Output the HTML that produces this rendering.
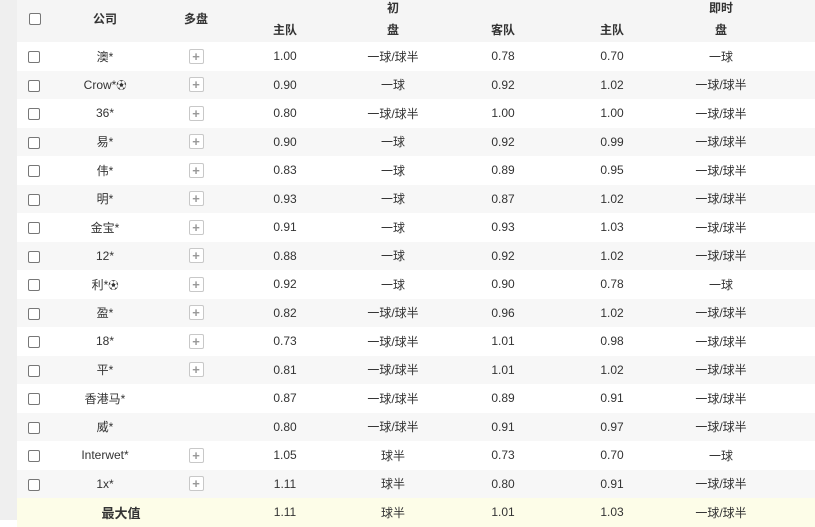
<!DOCTYPE html>
<html><head><meta charset="utf-8"><style>
*{margin:0;padding:0;box-sizing:border-box}
body{width:815px;height:520px;overflow:hidden;background:#fff;font-family:"Liberation Sans","Noto Sans CJK SC",sans-serif;font-size:12px;color:#333;position:relative}
.strip{position:absolute;left:0;top:0;width:17px;height:520px;background:#efefef}
.hd{position:absolute;left:17px;top:0;width:798px;height:42px;background:#f5f5f5}
.t{position:absolute;transform:translateX(-50%);white-space:nowrap;line-height:14px}
.b{font-weight:bold}
.cb{position:absolute;left:29px;width:12px;height:12px;border:1px solid #777;border-radius:2px;background:#fff}
table{position:absolute;left:17px;top:42px;border-collapse:collapse;width:798px;table-layout:fixed}
td{height:28.5px;text-align:center;padding:0;white-space:nowrap}
td.co{padding-left:10px}
tr:nth-child(even){background:#f7f7f7}
tr.mx{background:#fdfde8;font-weight:bold}
.p{display:inline-block;width:15px;height:15px;border:1px solid #c8c8c8;border-radius:2px;color:#999;font-size:13px;line-height:13px;font-weight:bold;vertical-align:middle;background:#fff}
.c{display:inline-block;width:12px;height:12px;border:1px solid #777;border-radius:2px;vertical-align:middle;background:#fff}
.s{font-size:10px}
</style></head><body>
<div class="strip"></div>
<div class="hd"></div>
<div class="cb" style="top:13px"></div>
<div class="t b" style="left:105px;top:12px">公司</div>
<div class="t b" style="left:196px;top:12px">多盘</div>
<div class="t b" style="left:393px;top:1px">初</div>
<div class="t b" style="left:721px;top:1px">即时</div>
<div class="t b" style="left:285px;top:23px">主队</div>
<div class="t b" style="left:393px;top:23px">盘</div>
<div class="t b" style="left:503px;top:23px">客队</div>
<div class="t b" style="left:612px;top:23px">主队</div>
<div class="t b" style="left:721px;top:23px">盘</div>
<table>
<colgroup><col style="width:34px"><col style="width:98px"><col style="width:94px"><col style="width:84px"><col style="width:132px"><col style="width:88px"><col style="width:130px"><col style="width:88px"><col></colgroup>
<tr><td><span class="c"></span></td><td class="co">澳*</td><td><span class="p">+</span></td><td>1.00</td><td>一球/球半</td><td>0.78</td><td>0.70</td><td>一球</td><td></td></tr>
<tr><td><span class="c"></span></td><td class="co">Crow*<span class="s">⚽</span></td><td><span class="p">+</span></td><td>0.90</td><td>一球</td><td>0.92</td><td>1.02</td><td>一球/球半</td><td></td></tr>
<tr><td><span class="c"></span></td><td class="co">36*</td><td><span class="p">+</span></td><td>0.80</td><td>一球/球半</td><td>1.00</td><td>1.00</td><td>一球/球半</td><td></td></tr>
<tr><td><span class="c"></span></td><td class="co">易*</td><td><span class="p">+</span></td><td>0.90</td><td>一球</td><td>0.92</td><td>0.99</td><td>一球/球半</td><td></td></tr>
<tr><td><span class="c"></span></td><td class="co">伟*</td><td><span class="p">+</span></td><td>0.83</td><td>一球</td><td>0.89</td><td>0.95</td><td>一球/球半</td><td></td></tr>
<tr><td><span class="c"></span></td><td class="co">明*</td><td><span class="p">+</span></td><td>0.93</td><td>一球</td><td>0.87</td><td>1.02</td><td>一球/球半</td><td></td></tr>
<tr><td><span class="c"></span></td><td class="co">金宝*</td><td><span class="p">+</span></td><td>0.91</td><td>一球</td><td>0.93</td><td>1.03</td><td>一球/球半</td><td></td></tr>
<tr><td><span class="c"></span></td><td class="co">12*</td><td><span class="p">+</span></td><td>0.88</td><td>一球</td><td>0.92</td><td>1.02</td><td>一球/球半</td><td></td></tr>
<tr><td><span class="c"></span></td><td class="co">利*<span class="s">⚽</span></td><td><span class="p">+</span></td><td>0.92</td><td>一球</td><td>0.90</td><td>0.78</td><td>一球</td><td></td></tr>
<tr><td><span class="c"></span></td><td class="co">盈*</td><td><span class="p">+</span></td><td>0.82</td><td>一球/球半</td><td>0.96</td><td>1.02</td><td>一球/球半</td><td></td></tr>
<tr><td><span class="c"></span></td><td class="co">18*</td><td><span class="p">+</span></td><td>0.73</td><td>一球/球半</td><td>1.01</td><td>0.98</td><td>一球/球半</td><td></td></tr>
<tr><td><span class="c"></span></td><td class="co">平*</td><td><span class="p">+</span></td><td>0.81</td><td>一球/球半</td><td>1.01</td><td>1.02</td><td>一球/球半</td><td></td></tr>
<tr><td><span class="c"></span></td><td class="co">香港马*</td><td></td><td>0.87</td><td>一球/球半</td><td>0.89</td><td>0.91</td><td>一球/球半</td><td></td></tr>
<tr><td><span class="c"></span></td><td class="co">威*</td><td></td><td>0.80</td><td>一球/球半</td><td>0.91</td><td>0.97</td><td>一球/球半</td><td></td></tr>
<tr><td><span class="c"></span></td><td class="co">Interwet*</td><td><span class="p">+</span></td><td>1.05</td><td>球半</td><td>0.73</td><td>0.70</td><td>一球</td><td></td></tr>
<tr><td><span class="c"></span></td><td class="co">1x*</td><td><span class="p">+</span></td><td>1.11</td><td>球半</td><td>0.80</td><td>0.91</td><td>一球/球半</td><td></td></tr>
<tr class="mx"><td></td><td style="font-size:13px;padding-left:42px">最大值</td><td></td><td style="font-weight:normal">1.11</td><td style="font-weight:normal">球半</td><td style="font-weight:normal">1.01</td><td style="font-weight:normal">1.03</td><td style="font-weight:normal">一球/球半</td><td></td></tr>
</table>
</body></html>
